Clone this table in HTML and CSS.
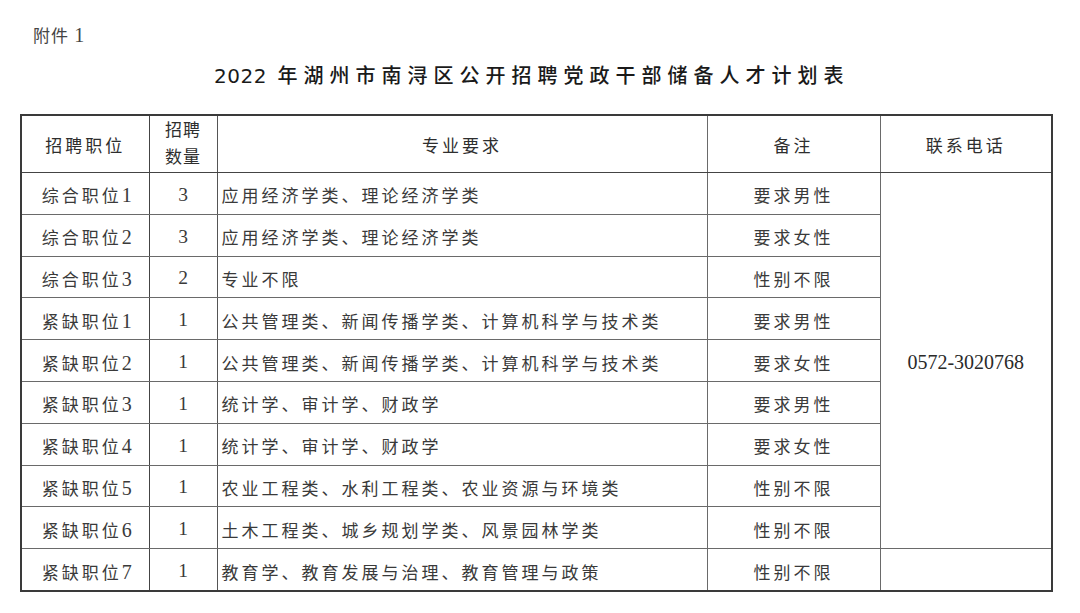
FILE: index.html
```html
<!DOCTYPE html>
<html lang="zh-CN">
<head>
<meta charset="utf-8">
<title>2022年湖州市南浔区公开招聘党政干部储备人才计划表</title>
<link rel="stylesheet" href="styles.css">
</head>
<body>
<div class="page">
  <div class="attach">附件 <span class="d">1</span></div>
  <h1 class="title"><span class="year">2022</span> 年湖州市南浔区公开招聘党政干部储备人才计划表</h1>
  <table class="plan">
    <colgroup>
      <col class="c-pos"><col class="c-num"><col class="c-major"><col class="c-note"><col class="c-tel">
    </colgroup>
    <thead>
      <tr>
        <th>招聘职位</th>
        <th class="two">招聘<br>数量</th>
        <th>专业要求</th>
        <th>备注</th>
        <th>联系电话</th>
      </tr>
    </thead>
    <tbody>
      <tr><td class="pos">综合职位<span class="d">1</span></td><td class="num">3</td><td class="major">应用经济学类、理论经济学类</td><td class="note">要求男性</td><td class="tel" rowspan="9">0572-3020768</td></tr>
      <tr><td class="pos">综合职位<span class="d">2</span></td><td class="num">3</td><td class="major">应用经济学类、理论经济学类</td><td class="note">要求女性</td></tr>
      <tr><td class="pos">综合职位<span class="d">3</span></td><td class="num">2</td><td class="major">专业不限</td><td class="note">性别不限</td></tr>
      <tr><td class="pos">紧缺职位<span class="d">1</span></td><td class="num">1</td><td class="major">公共管理类、新闻传播学类、计算机科学与技术类</td><td class="note">要求男性</td></tr>
      <tr><td class="pos">紧缺职位<span class="d">2</span></td><td class="num">1</td><td class="major">公共管理类、新闻传播学类、计算机科学与技术类</td><td class="note">要求女性</td></tr>
      <tr><td class="pos">紧缺职位<span class="d">3</span></td><td class="num">1</td><td class="major">统计学、审计学、财政学</td><td class="note">要求男性</td></tr>
      <tr><td class="pos">紧缺职位<span class="d">4</span></td><td class="num">1</td><td class="major">统计学、审计学、财政学</td><td class="note">要求女性</td></tr>
      <tr><td class="pos">紧缺职位<span class="d">5</span></td><td class="num">1</td><td class="major">农业工程类、水利工程类、农业资源与环境类</td><td class="note">性别不限</td></tr>
      <tr><td class="pos">紧缺职位<span class="d">6</span></td><td class="num">1</td><td class="major">土木工程类、城乡规划学类、风景园林学类</td><td class="note">性别不限</td></tr>
      <tr><td class="pos">紧缺职位<span class="d">7</span></td><td class="num">1</td><td class="major">教育学、教育发展与治理、教育管理与政策</td><td class="note">性别不限</td><td class="tel"></td></tr>
    </tbody>
  </table>
</div>
</body>
</html>
```

FILE: styles.css
```css
html, body {
  margin: 0;
  padding: 0;
  background: #ffffff;
}

body {
  font-family: "Liberation Serif", "Noto Sans CJK SC", serif;
  color: #3a3a3a;
}

.page {
  width: 1080px;
  height: 613px;
  padding: 24px 0 0 20px;
  box-sizing: border-box;
}

.attach {
  margin-left: 13px;
  font-size: 17px;
  line-height: 22px;
  letter-spacing: 1px;
  color: #444;
}

.attach .d {
  font-size: 20px;
}

.title {
  margin: 13px 0 0 0;
  width: 1031px;
  padding-left: 194px;
  box-sizing: border-box;
  font-family: "Noto Sans CJK SC", sans-serif;
  font-weight: 500;
  font-size: 20px;
  line-height: 28px;
  letter-spacing: 6px;
  color: #1a1a1a;
}

.title .year {
  font-family: "DejaVu Sans", "Noto Sans", sans-serif;
  font-weight: 400;
  font-size: 20px;
  letter-spacing: 0.5px;
}

.plan {
  margin-top: 24px;
  border-collapse: collapse;
  table-layout: fixed;
  width: 1031px;
  border: 2px solid #3a3a3a;
}

.c-pos { width: 128px; }
.c-num { width: 68px; }
.c-major { width: 490px; }
.c-note { width: 173px; }
.c-tel { width: 172px; }

.plan th,
.plan td {
  border: 1px solid #6a6a6a;
  padding: 0;
  font-size: 17px;
  font-weight: 400;
  letter-spacing: 3px;
  text-align: center;
  vertical-align: middle;
  color: #3a3a3a;
}

.plan td {
  height: 37.8px;
  padding-top: 3px;
}

.plan th {
  height: 56px;
  color: #2e2e2e;
}

.plan thead th {
  border-bottom: 1.5px solid #444;
}

.plan th.two {
  line-height: 27px;
  letter-spacing: 1px;
}

.plan td.pos,
.plan th:first-child {
  border-right: 1.5px solid #444;
}

.plan td.num,
.plan th.two {
  border-right: 1.5px solid #555;
}

.plan td .d {
  font-size: 20px;
  letter-spacing: 0;
}

.plan td.num {
  letter-spacing: 0;
  font-size: 19.5px;
}

.plan td.major {
  text-align: left;
  padding-left: 4px;
}

.plan td.pos {
  padding-left: 3px;
}

.plan td.tel {
  font-size: 20px;
  letter-spacing: 0;
  color: #2a2a2a;
}
```
